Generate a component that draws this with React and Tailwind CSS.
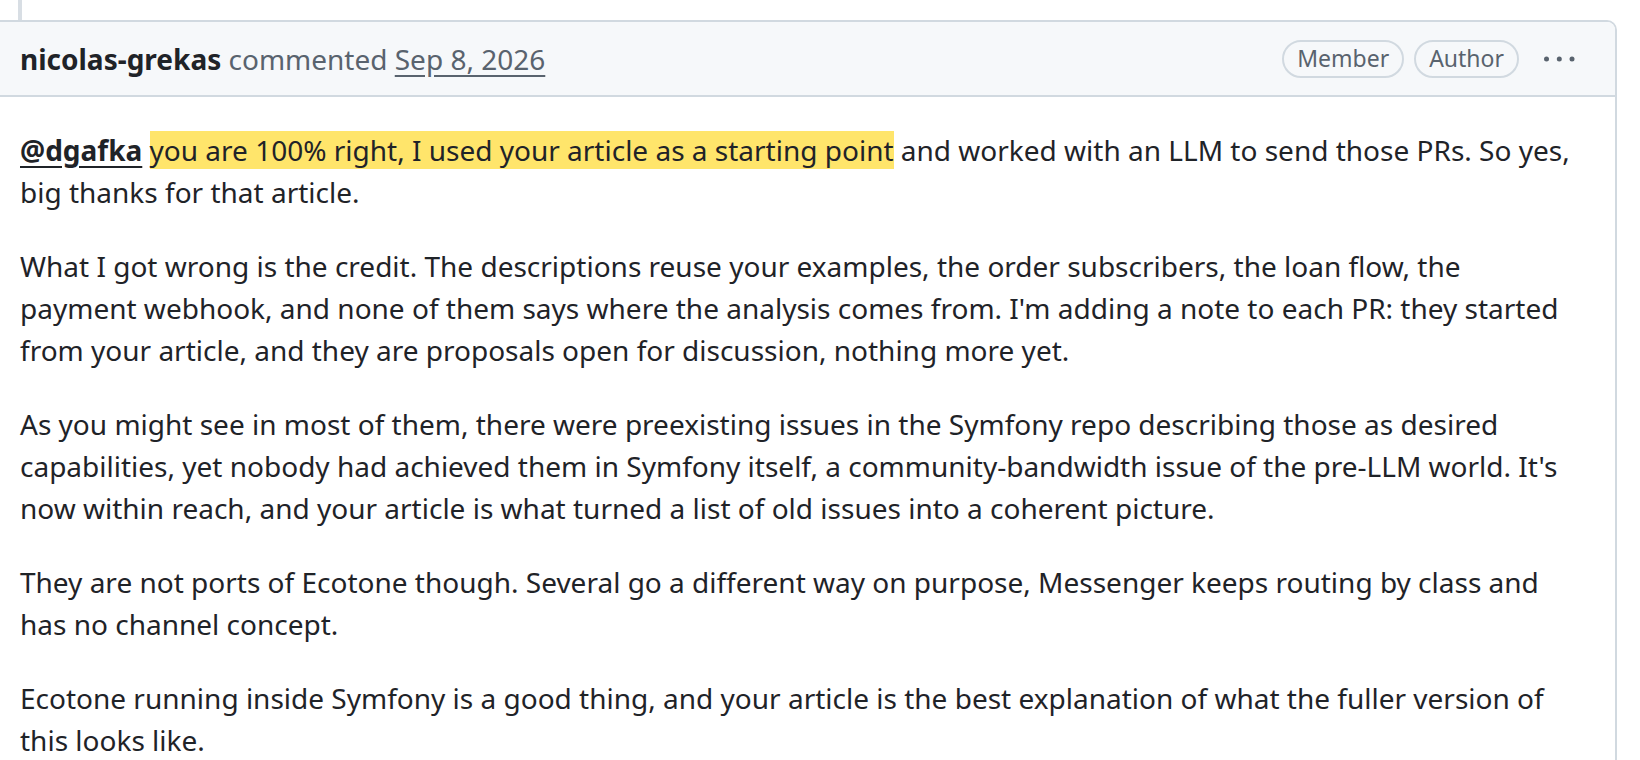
export default function App() {
  return (
    <div className="w-[1640px] h-[760px] bg-white overflow-hidden font-['Noto_Sans',sans-serif]">
      <div className="ml-[18px] w-[4px] h-[20px] bg-[#d8dee4]" />
      <div className="-ml-[14px] w-[1631px] border-2 border-[#d1d9e0] rounded-t-[10px] overflow-hidden">
        <div className="h-[75px] flex items-center bg-[#f6f8fa] border-b-2 border-[#d1d9e0] pl-[32px] pr-[40px]">
          <div className="flex-1 text-[28px] leading-[40px] whitespace-nowrap">
            <span className="font-bold text-[#1f2328]">nicolas-grekas</span>
            <span className="text-[#59636e]"> commented </span>
            <span className="text-[#59636e] underline underline-offset-[5px]">Sep 8, 2026</span>
          </div>
          <div className="flex items-center">
            <span className="h-[38px] px-[13px] flex items-center border-2 border-[#d1d9e0] rounded-full text-[23px] text-[#59636e]">Member</span>
            <span className="ml-[10px] h-[38px] px-[13px] flex items-center border-2 border-[#d1d9e0] rounded-full text-[23px] text-[#59636e]">Author</span>
            <svg className="ml-[25px]" width="31" height="6" viewBox="0 0 31 6">
              <circle cx="2.5" cy="3" r="2.5" fill="#59636e" />
              <circle cx="15.3" cy="3" r="2.5" fill="#59636e" />
              <circle cx="28" cy="3" r="2.5" fill="#59636e" />
            </svg>
          </div>
        </div>
        <div className="px-[32px] pt-[32px] text-[28px] leading-[42px] text-[#1f2328]">
          <p className="mb-[32px]">
            <span className="font-bold underline underline-offset-[5px]">@dgafka</span>{" "}
            <span className="bg-[#ffe56b]">you are 100% right, I used your article as a starting point</span> and worked with an LLM to send those PRs. So yes, big thanks for that article.
          </p>
          <p className="mb-[32px]">
            What I got wrong is the credit. The descriptions reuse your examples, the order subscribers, the loan flow, the payment webhook, and none of them says where the analysis comes from. I'm adding a note to each PR: they started from your article, and they are proposals open for discussion, nothing more yet.
          </p>
          <p className="mb-[32px]">
            As you might see in most of them, there were preexisting issues in the Symfony repo describing those as desired capabilities, yet nobody had achieved them in Symfony itself, a community-bandwidth issue of the pre-LLM world. It's now within reach, and your article is what turned a list of old issues into a coherent picture.
          </p>
          <p className="mb-[32px]">
            They are not ports of Ecotone though. Several go a different way on purpose, Messenger keeps routing by class and has no channel concept.
          </p>
          <p className="mb-[32px]">
            Ecotone running inside Symfony is a good thing, and your article is the best explanation of what the fuller version of this looks like.
          </p>
        </div>
      </div>
    </div>
  );
}
